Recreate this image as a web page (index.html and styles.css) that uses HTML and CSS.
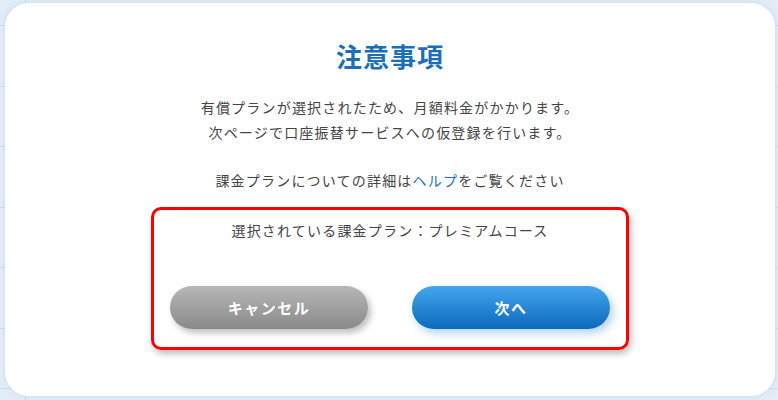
FILE: index.html
```html
<!DOCTYPE html>
<html lang="ja">
<head>
    <meta charset="UTF-8">
    <meta name="viewport" content="width=device-width, initial-scale=1.0">
    <title>注意事項</title>
    <link rel="stylesheet" href="styles.css">
</head>
<body>
    <!-- Modal -->
    <div class="modal">
        <h1>注意事項</h1>
        <p class="notice">
            有償プランが選択されたため、月額料金がかかります。<br>
            次ページで口座振替サービスへの仮登録を行います。
        </p>
        <p class="notice help">課金プランについての詳細は<a href="#">ヘルプ</a>をご覧ください</p>

        <div class="plan-box">
            <p class="plan-name">選択されている課金プラン：プレミアムコース</p>
            <div class="button-container">
                <button class="btn btn-cancel">キャンセル</button>
                <button class="btn btn-next">次へ</button>
            </div>
        </div>
    </div>
</body>
</html>
```

FILE: styles.css
```css
body {
    font-family: "Noto Sans CJK JP", "Noto Sans", sans-serif;
    margin: 0;
    padding: 3px 3px 4px 5px;
    height: 400px;
    box-sizing: border-box;
    background-color: #e3edf7;
    background-image:
        linear-gradient(to right, transparent 25px, #c9dcee 25px, #c9dcee 26px, transparent 26px),
        repeating-linear-gradient(to bottom, transparent 0, transparent 25px, #c9dcee 25px, #c9dcee 26px, transparent 26px, transparent 60.5px);
    color: #444;
    overflow: hidden;
}

.modal {
    background: #fff;
    border-radius: 24px;
    height: 393px;
    box-shadow: 0 0 6px rgba(180, 205, 230, 0.6);
    text-align: center;
    padding-top: 33px;
    box-sizing: border-box;
}

h1 {
    margin: 0;
    font-size: 26px;
    line-height: 40px;
    color: #1a6fb7;
    font-weight: bold;
    letter-spacing: 1px;
}

.notice {
    margin: 0;
    font-size: 14px;
    line-height: 25px;
    letter-spacing: 1.2px;
}

.notice:first-of-type {
    margin-top: 19px;
}

.help {
    margin-top: 23px;
}

.help a {
    color: #1a73c0;
    text-decoration: none;
}

.plan-box {
    width: 478px;
    margin: 14px auto 0;
    box-sizing: border-box;
    border: 3px solid #ff0000;
    border-radius: 10px;
    box-shadow: 2px 4px 6px rgba(0, 0, 0, 0.25);
    padding: 9px 16px 18px;
}

.plan-name {
    margin: 0;
    font-size: 14px;
    line-height: 22px;
    letter-spacing: 1.2px;
}

.button-container {
    display: flex;
    justify-content: center;
    gap: 44px;
    margin-top: 45px;
}

.btn {
    width: 198px;
    height: 43px;
    border: none;
    border-radius: 22px;
    color: #fff;
    font-family: inherit;
    font-size: 15px;
    font-weight: bold;
    letter-spacing: 1.5px;
    cursor: pointer;
}

.btn-cancel {
    background: linear-gradient(to bottom, #b6b6b6, #8a8a8a);
    box-shadow: 3px 4px 6px rgba(0, 0, 0, 0.25);
}

.btn-next {
    background: linear-gradient(to bottom, #45a6ee, #0b69bb);
    box-shadow: 3px 4px 8px rgba(60, 140, 210, 0.4);
}
```
